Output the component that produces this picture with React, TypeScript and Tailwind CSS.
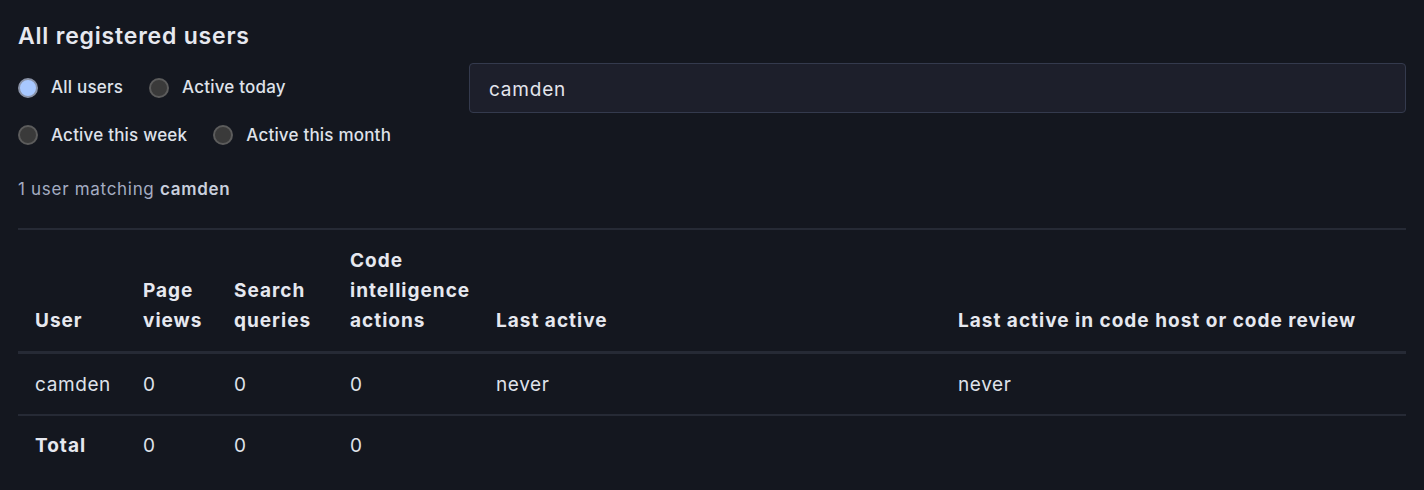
import { useState } from 'react';

type Filter = 'all' | 'today' | 'week' | 'month';

const Radio = ({ checked, label, onClick }: { checked: boolean; label: string; onClick: () => void }) => (
  <label className="flex items-center gap-[13px] cursor-pointer" onClick={onClick}>
    <span
      className={
        checked
          ? 'w-[20px] h-[20px] rounded-full border-[2px] border-[#8a93a8] bg-[#a8c8ff]'
          : 'w-[20px] h-[20px] rounded-full border-[2px] border-[#5c5c5c] bg-[#3a3a3a]'
      }
    />
    <span className="text-[17px] font-medium tracking-[0.2px] text-[#dfe2ea]">{label}</span>
  </label>
);

const App = () => {
  const [filter, setFilter] = useState<Filter>('all');
  const [query, setQuery] = useState('camden');

  return (
    <div className="min-h-[490px] bg-[#14171f] px-[18px] pt-[20px] text-[#e3e5ec]" style={{ fontFamily: 'Inter, "Noto Sans", sans-serif' }}>
      <div className="flex">
        <div className="w-[451px]">
          <h2 className="text-[23px] leading-[32px] font-semibold tracking-[0.8px] text-[#e6e8ef]">All registered users</h2>
          <div className="mt-[23px] flex flex-wrap gap-x-[26px] gap-y-[22px] w-[400px]">
            <Radio checked={filter === 'all'} label="All users" onClick={() => setFilter('all')} />
            <Radio checked={filter === 'today'} label="Active today" onClick={() => setFilter('today')} />
            <Radio checked={filter === 'week'} label="Active this week" onClick={() => setFilter('week')} />
            <Radio checked={filter === 'month'} label="Active this month" onClick={() => setFilter('month')} />
          </div>
          <p className="mt-[29px] text-[17px] tracking-[0.7px] text-[#a4acc2]">
            1 user matching <span className="font-semibold text-[#c9cfdd]">camden</span>
          </p>
        </div>
        <div className="flex-1 pt-[43px]">
          <input
            value={query}
            onChange={(e) => setQuery(e.target.value)}
            className="w-full h-[50px] rounded-[4px] border border-[#343a4d] bg-[#1d1f2b] px-[19px] pt-[3px] text-[19px] tracking-[0.8px] text-[#e3e5ec] outline-none"
          />
        </div>
      </div>

      <table className="mt-[25px] w-full table-fixed border-collapse text-[19px] leading-[30px] tracking-[0.6px]">
        <colgroup>
          <col className="w-[108px]" />
          <col className="w-[91px]" />
          <col className="w-[116px]" />
          <col className="w-[146px]" />
          <col className="w-[462px]" />
          <col />
        </colgroup>
        <thead>
          <tr className="border-t-[2px] border-b-[3px] border-[#262a35] align-bottom text-left text-[#e6e8ef]">
            <th className="px-[17px] pt-[16px] pb-[15px] font-bold tracking-[1px]">User</th>
            <th className="px-[17px] pt-[16px] pb-[15px] font-bold tracking-[1px]">Page views</th>
            <th className="px-[17px] pt-[16px] pb-[15px] font-bold tracking-[1px]">Search queries</th>
            <th className="px-[17px] pt-[16px] pb-[15px] font-bold tracking-[1px]">Code intelligence actions</th>
            <th className="px-[17px] pt-[16px] pb-[15px] font-bold tracking-[1px]">Last active</th>
            <th className="px-[17px] pt-[16px] pb-[15px] font-bold tracking-[1px] whitespace-nowrap">Last active in code host or code review</th>
          </tr>
        </thead>
        <tbody className="text-[#dfe2ea]">
          <tr className="border-b-[2px] border-[#262a35]">
            <td className="px-[17px] pt-[16px] pb-[14px]">camden</td>
            <td className="px-[17px] pt-[16px] pb-[14px]">0</td>
            <td className="px-[17px] pt-[16px] pb-[14px]">0</td>
            <td className="px-[17px] pt-[16px] pb-[14px]">0</td>
            <td className="px-[17px] pt-[16px] pb-[14px]">never</td>
            <td className="px-[17px] pt-[16px] pb-[14px]">never</td>
          </tr>
          <tr>
            <td className="px-[17px] pt-[15px] pb-[15px] font-bold tracking-[1px] text-[#e6e8ef]">Total</td>
            <td className="px-[17px] pt-[15px] pb-[15px]">0</td>
            <td className="px-[17px] pt-[15px] pb-[15px]">0</td>
            <td className="px-[17px] pt-[15px] pb-[15px]">0</td>
            <td className="px-[17px] pt-[15px] pb-[15px]"></td>
            <td className="px-[17px] pt-[15px] pb-[15px]"></td>
          </tr>
        </tbody>
      </table>
    </div>
  );
};

export default App;
